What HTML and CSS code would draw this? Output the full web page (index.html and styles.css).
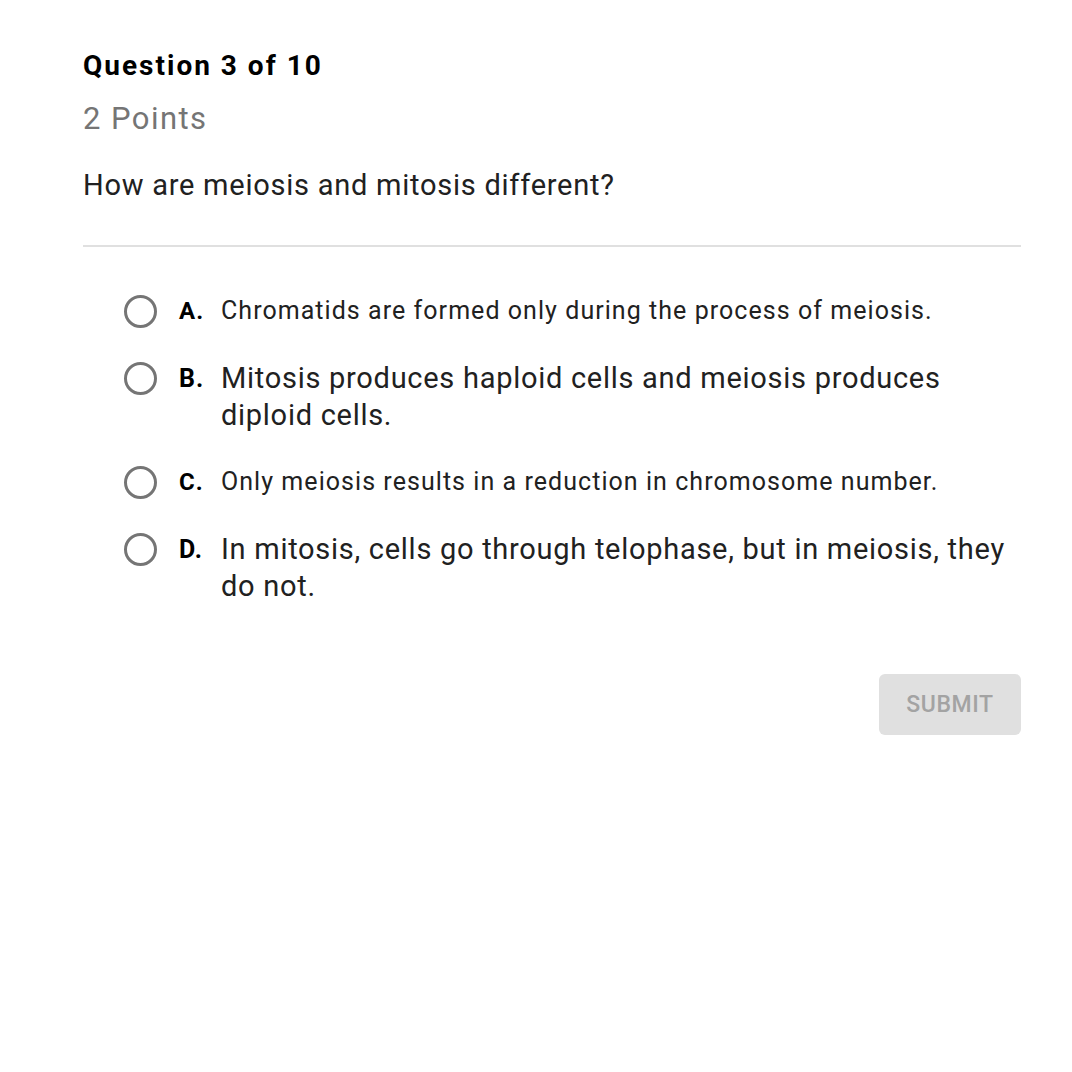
FILE: index.html
```html
<!DOCTYPE html>
<html>
<head>
<meta charset="utf-8">
<link rel="stylesheet" href="styles.css">
</head>
<body>
<div class="page">
  <div class="qnum">Question 3 of 10</div>
  <div class="points">2 Points</div>
  <div class="prompt">How are meiosis and mitosis different?</div>
  <hr class="divider">
  <div class="options">
    <div class="option small">
      <span class="radio"></span>
      <span class="letter">A.</span>
      <span class="text">Chromatids are formed only during the process of meiosis.</span>
    </div>
    <div class="option large">
      <span class="radio"></span>
      <span class="letter">B.</span>
      <span class="text">Mitosis produces haploid cells and meiosis produces diploid cells.</span>
    </div>
    <div class="option small">
      <span class="radio"></span>
      <span class="letter">C.</span>
      <span class="text">Only meiosis results in a reduction in chromosome number.</span>
    </div>
    <div class="option large">
      <span class="radio"></span>
      <span class="letter">D.</span>
      <span class="text">In mitosis, cells go through telophase, but in meiosis, they do not.</span>
    </div>
  </div>
  <div class="actions">
    <button class="submit">SUBMIT</button>
  </div>
</div>
</body>
</html>
```
FILE: styles.css
```css
html, body {
  margin: 0;
  padding: 0;
  background: #ffffff;
}
body {
  font-family: Roboto, "Liberation Sans", sans-serif;
  color: #212121;
}
.page {
  width: 938px;
  padding: 48px 0 0 83px;
}
.qnum {
  font-size: 28px;
  font-weight: 700;
  letter-spacing: 2px;
  color: #000;
  line-height: 36px;
}
.points {
  margin-top: 17px;
  font-size: 31px;
  letter-spacing: 1.45px;
  color: #757575;
  line-height: 36px;
}
.prompt {
  margin-top: 30px;
  font-size: 29px;
  letter-spacing: 0.75px;
  line-height: 36px;
  color: #212121;
}
.divider {
  margin: 42px 0 0 0;
  border: 0;
  border-top: 2px solid #e0e0e0;
  height: 0;
}
.options {
  padding: 48px 0 0 41px;
  display: flex;
  flex-direction: column;
  gap: 32px;
}
.option {
  display: flex;
  align-items: flex-start;
}
.radio {
  flex: none;
  width: 27px;
  height: 27px;
  border: 3px solid #757575;
  border-radius: 50%;
  margin-right: 22px;
}
.letter {
  flex: none;
  font-weight: 700;
  color: #000;
  width: 42px;
  letter-spacing: 1px;
}
.text {
  color: #212121;
}
.option.small {
  font-size: 25px;
  letter-spacing: 1.05px;
  line-height: 32px;
}
.option.large {
  font-size: 29px;
  letter-spacing: 0.72px;
  line-height: 37px;
}
.option.small .radio { margin-top: 0px; }
.option.large .radio { margin-top: 2px; }
.option.small .letter { font-size: 24px; }
.option.large .letter { font-size: 25px; }
.option.large .text { width: 800px; }
.actions {
  display: flex;
  justify-content: flex-end;
  margin-top: 69px;
}
.submit {
  width: 142px;
  height: 61px;
  border: 0;
  border-radius: 6px;
  background: #e0e0e0;
  color: #a3a3a3;
  font-family: Roboto, "Liberation Sans", sans-serif;
  font-size: 23px;
  letter-spacing: 0.6px;
  font-weight: 500;
}
```
